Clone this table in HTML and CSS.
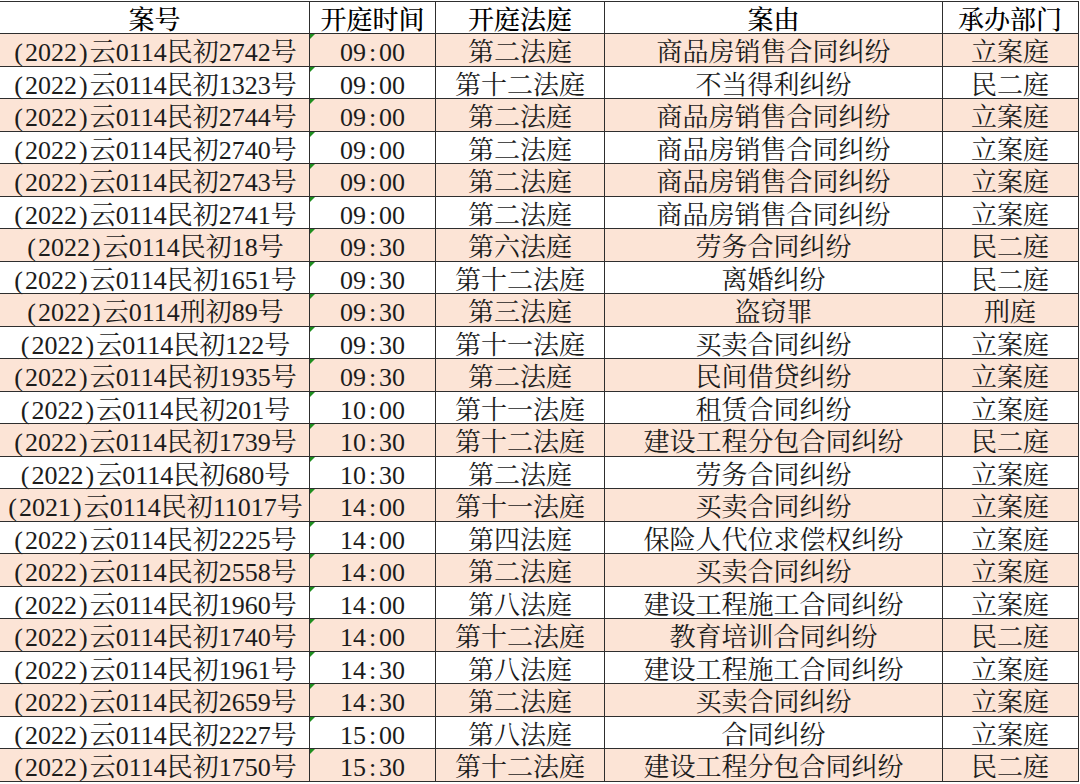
FILE: index.html
```html
<!DOCTYPE html>
<html lang="zh-CN">
<head>
<meta charset="utf-8">
<title>开庭公告</title>
<link rel="stylesheet" href="styles.css">
</head>
<body>
<div class="sheet">
  <div class="row head"><div class="c">案号</div><div class="c">开庭时间</div><div class="c">开庭法庭</div><div class="c">案由</div><div class="c">承办部门</div></div>
  <div class="row pink"><div class="c"><span class="p">(</span>2022<span class="p">)</span>云0114民初2742号</div><div class="c t">09<span class="k">:</span>00</div><div class="c">第二法庭</div><div class="c">商品房销售合同纠纷</div><div class="c">立案庭</div></div>
  <div class="row"><div class="c"><span class="p">(</span>2022<span class="p">)</span>云0114民初1323号</div><div class="c t">09<span class="k">:</span>00</div><div class="c">第十二法庭</div><div class="c">不当得利纠纷</div><div class="c">民二庭</div></div>
  <div class="row pink"><div class="c"><span class="p">(</span>2022<span class="p">)</span>云0114民初2744号</div><div class="c t">09<span class="k">:</span>00</div><div class="c">第二法庭</div><div class="c">商品房销售合同纠纷</div><div class="c">立案庭</div></div>
  <div class="row"><div class="c"><span class="p">(</span>2022<span class="p">)</span>云0114民初2740号</div><div class="c t">09<span class="k">:</span>00</div><div class="c">第二法庭</div><div class="c">商品房销售合同纠纷</div><div class="c">立案庭</div></div>
  <div class="row pink"><div class="c"><span class="p">(</span>2022<span class="p">)</span>云0114民初2743号</div><div class="c t">09<span class="k">:</span>00</div><div class="c">第二法庭</div><div class="c">商品房销售合同纠纷</div><div class="c">立案庭</div></div>
  <div class="row"><div class="c"><span class="p">(</span>2022<span class="p">)</span>云0114民初2741号</div><div class="c t">09<span class="k">:</span>00</div><div class="c">第二法庭</div><div class="c">商品房销售合同纠纷</div><div class="c">立案庭</div></div>
  <div class="row pink"><div class="c"><span class="p">(</span>2022<span class="p">)</span>云0114民初18号</div><div class="c t">09<span class="k">:</span>30</div><div class="c">第六法庭</div><div class="c">劳务合同纠纷</div><div class="c">民二庭</div></div>
  <div class="row"><div class="c"><span class="p">(</span>2022<span class="p">)</span>云0114民初1651号</div><div class="c t">09<span class="k">:</span>30</div><div class="c">第十二法庭</div><div class="c">离婚纠纷</div><div class="c">民二庭</div></div>
  <div class="row pink"><div class="c"><span class="p">(</span>2022<span class="p">)</span>云0114刑初89号</div><div class="c t">09<span class="k">:</span>30</div><div class="c">第三法庭</div><div class="c">盗窃罪</div><div class="c">刑庭</div></div>
  <div class="row"><div class="c"><span class="p">(</span>2022<span class="p">)</span>云0114民初122号</div><div class="c t">09<span class="k">:</span>30</div><div class="c">第十一法庭</div><div class="c">买卖合同纠纷</div><div class="c">立案庭</div></div>
  <div class="row pink"><div class="c"><span class="p">(</span>2022<span class="p">)</span>云0114民初1935号</div><div class="c t">09<span class="k">:</span>30</div><div class="c">第二法庭</div><div class="c">民间借贷纠纷</div><div class="c">立案庭</div></div>
  <div class="row"><div class="c"><span class="p">(</span>2022<span class="p">)</span>云0114民初201号</div><div class="c t">10<span class="k">:</span>00</div><div class="c">第十一法庭</div><div class="c">租赁合同纠纷</div><div class="c">立案庭</div></div>
  <div class="row pink"><div class="c"><span class="p">(</span>2022<span class="p">)</span>云0114民初1739号</div><div class="c t">10<span class="k">:</span>30</div><div class="c">第十二法庭</div><div class="c">建设工程分包合同纠纷</div><div class="c">民二庭</div></div>
  <div class="row"><div class="c"><span class="p">(</span>2022<span class="p">)</span>云0114民初680号</div><div class="c t">10<span class="k">:</span>30</div><div class="c">第二法庭</div><div class="c">劳务合同纠纷</div><div class="c">立案庭</div></div>
  <div class="row pink"><div class="c"><span class="p">(</span>2021<span class="p">)</span>云0114民初11017号</div><div class="c t">14<span class="k">:</span>00</div><div class="c">第十一法庭</div><div class="c">买卖合同纠纷</div><div class="c">立案庭</div></div>
  <div class="row"><div class="c"><span class="p">(</span>2022<span class="p">)</span>云0114民初2225号</div><div class="c t">14<span class="k">:</span>00</div><div class="c">第四法庭</div><div class="c">保险人代位求偿权纠纷</div><div class="c">立案庭</div></div>
  <div class="row pink"><div class="c"><span class="p">(</span>2022<span class="p">)</span>云0114民初2558号</div><div class="c t">14<span class="k">:</span>00</div><div class="c">第二法庭</div><div class="c">买卖合同纠纷</div><div class="c">立案庭</div></div>
  <div class="row"><div class="c"><span class="p">(</span>2022<span class="p">)</span>云0114民初1960号</div><div class="c t">14<span class="k">:</span>00</div><div class="c">第八法庭</div><div class="c">建设工程施工合同纠纷</div><div class="c">立案庭</div></div>
  <div class="row pink"><div class="c"><span class="p">(</span>2022<span class="p">)</span>云0114民初1740号</div><div class="c t">14<span class="k">:</span>00</div><div class="c">第十二法庭</div><div class="c">教育培训合同纠纷</div><div class="c">民二庭</div></div>
  <div class="row"><div class="c"><span class="p">(</span>2022<span class="p">)</span>云0114民初1961号</div><div class="c t">14<span class="k">:</span>30</div><div class="c">第八法庭</div><div class="c">建设工程施工合同纠纷</div><div class="c">立案庭</div></div>
  <div class="row pink"><div class="c"><span class="p">(</span>2022<span class="p">)</span>云0114民初2659号</div><div class="c t">14<span class="k">:</span>30</div><div class="c">第二法庭</div><div class="c">买卖合同纠纷</div><div class="c">立案庭</div></div>
  <div class="row"><div class="c"><span class="p">(</span>2022<span class="p">)</span>云0114民初2227号</div><div class="c t">15<span class="k">:</span>00</div><div class="c">第八法庭</div><div class="c">合同纠纷</div><div class="c">立案庭</div></div>
  <div class="row pink"><div class="c"><span class="p">(</span>2022<span class="p">)</span>云0114民初1750号</div><div class="c t">15<span class="k">:</span>30</div><div class="c">第十二法庭</div><div class="c">建设工程分包合同纠纷</div><div class="c">民二庭</div></div>
</div>
</body>
</html>
```

FILE: styles.css
```css
html, body {
  margin: 0;
  padding: 0;
  background: #ffffff;
}

body {
  width: 1080px;
  height: 784px;
  overflow: hidden;
  font-family: "Liberation Serif", "Noto Serif CJK SC", "Noto Sans CJK SC", serif;
  color: #1c1c1c;
}

.sheet {
  margin-top: 1px;
  width: 1078px;
  border-top: 1px solid #2e2e2e;
  border-right: 1px solid #2e2e2e;
}

.row {
  display: grid;
  grid-template-columns: 310px 126px 169px 338px 134px;
  height: 32.5px;
  box-sizing: border-box;
  border-bottom: 1px solid #2e2e2e;
  font-size: 26px;
}

.row.head {
  height: 32px;
  color: #000000;
  font-weight: 500;
}

.row.pink {
  background: #fce4d6;
}

.c {
  position: relative;
  display: flex;
  align-items: center;
  justify-content: center;
  box-sizing: border-box;
  padding-top: 6px;
  border-right: 1px solid #2e2e2e;
  white-space: nowrap;
  line-height: 1;
}

.c:last-child {
  border-right: none;
}

.p {
  padding: 0 2px;
}

.k {
  padding: 0 3px;
}

.c.t::before {
  content: "";
  position: absolute;
  left: 0;
  top: 0;
  width: 0;
  height: 0;
  border-top: 5px solid #1f8f1f;
  border-right: 5px solid transparent;
}
```
